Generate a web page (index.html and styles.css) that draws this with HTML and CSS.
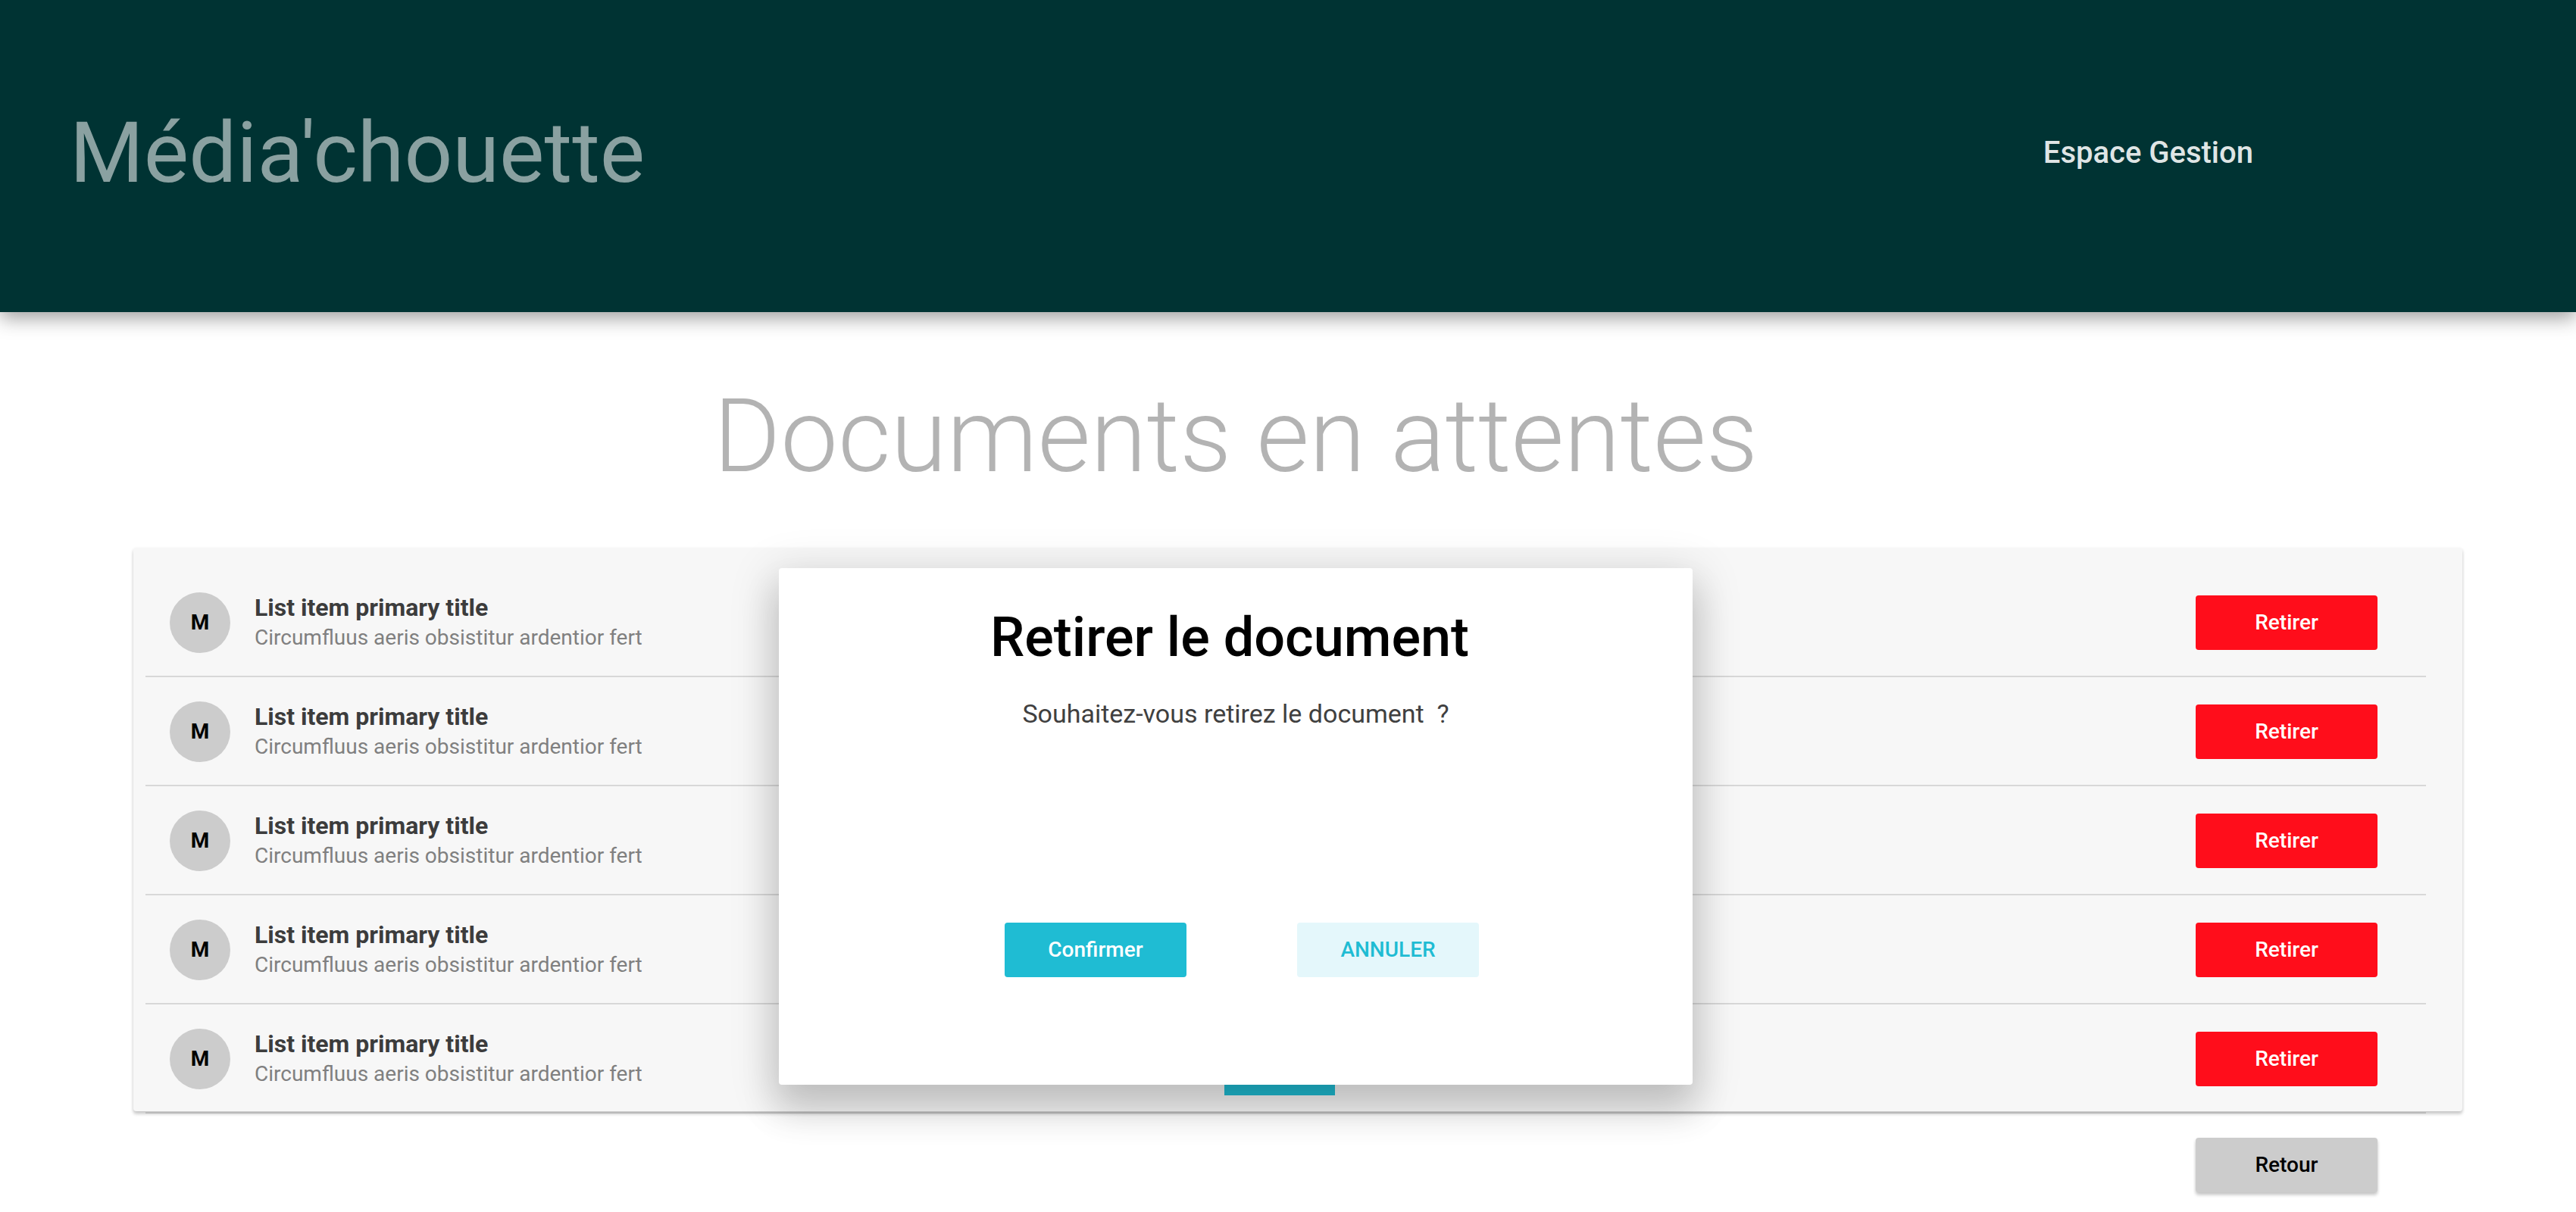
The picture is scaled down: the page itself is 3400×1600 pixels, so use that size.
FILE: index.html
```html
<!DOCTYPE html>
<html lang="fr">
<head>
<meta charset="utf-8">
<meta name="viewport" content="width=device-width, initial-scale=1">
<title>Média'chouette</title>
<link rel="stylesheet" href="styles.css">
</head>
<body>
<header class="topbar">
  <p class="brand">Média'chouette</p>
  <p class="space">Espace Gestion</p>
</header>
<main class="page">
  <h1 class="page-title">Documents en attentes</h1>
  <section class="panel">
    <ul class="list">
      <li class="row">
        <span class="avatar">M</span>
        <div class="text"><h2 class="title">List item primary title</h2><p class="sub">Circumfluus aeris obsistitur ardentior fert</p></div>
        <button class="btn btn-danger" type="button">Retirer</button>
      </li>
      <li class="row">
        <span class="avatar">M</span>
        <div class="text"><h2 class="title">List item primary title</h2><p class="sub">Circumfluus aeris obsistitur ardentior fert</p></div>
        <button class="btn btn-danger" type="button">Retirer</button>
      </li>
      <li class="row">
        <span class="avatar">M</span>
        <div class="text"><h2 class="title">List item primary title</h2><p class="sub">Circumfluus aeris obsistitur ardentior fert</p></div>
        <button class="btn btn-danger" type="button">Retirer</button>
      </li>
      <li class="row">
        <span class="avatar">M</span>
        <div class="text"><h2 class="title">List item primary title</h2><p class="sub">Circumfluus aeris obsistitur ardentior fert</p></div>
        <button class="btn btn-danger" type="button">Retirer</button>
      </li>
      <li class="row">
        <span class="avatar">M</span>
        <div class="text"><h2 class="title">List item primary title</h2><p class="sub">Circumfluus aeris obsistitur ardentior fert</p></div>
        <button class="btn btn-danger" type="button">Retirer</button>
      </li>
    </ul>
  </section>
  <div class="actions">
    <button class="btn btn-back" type="button">Retour</button>
  </div>
  <div class="tab"></div>
  <div class="dialog" role="dialog" aria-labelledby="dialog-title" aria-describedby="dialog-text">
    <h2 class="dialog-title" id="dialog-title">Retirer le document</h2>
    <p class="dialog-text" id="dialog-text">Souhaitez-vous retirez le document&nbsp; ?</p>
    <div class="dialog-actions">
      <button class="btn btn-primary" type="button">Confirmer</button>
      <button class="btn btn-soft" type="button">ANNULER</button>
    </div>
  </div>
</main>
</body>
</html>
```

FILE: styles.css
```css
* { box-sizing: border-box; }

body {
  margin: 0;
  background: #fff;
  color: #000;
  font-family: Roboto, "Liberation Sans", sans-serif;
}

h1, h2, p, ul { margin: 0; padding: 0; }

.topbar {
  display: flex;
  align-items: center;
  justify-content: space-between;
  padding: 130px 426px 138px 92px;
  background: #003333;
  box-shadow: 0 8px 24px rgba(0, 0, 0, 0.38);
}

.brand {
  color: #8aa1a1;
  font-size: 112px;
  line-height: 144px;
}

.space {
  color: #dfe5e5;
  font-size: 40px;
  font-weight: 500;
  line-height: 48px;
}

.page {
  position: relative;
  padding: 84px 150px 24px 176px;
}

.page-title {
  padding-right: 164px;
  color: #b3b3b3;
  font-size: 135px;
  font-weight: 300;
  line-height: 160px;
  text-align: center;
}

.panel {
  height: 744px;
  margin-top: 67px;
  padding: 27px 48px 0 16px;
  background: #f7f7f7;
  border-radius: 4px;
  box-shadow: 0 4px 4px rgba(0, 0, 0, 0.14), 0 2px 4px rgba(0, 0, 0, 0.12);
}

.list { list-style: none; }

.row {
  display: flex;
  align-items: center;
  height: 144px;
  padding: 2px 64px 0 32px;
  border-bottom: 2px solid #d8d8d8;
}

.row:last-child { border-bottom-color: #bababa; }

.avatar {
  width: 80px;
  height: 80px;
  border-radius: 50%;
  background: #ccc;
  font-size: 28px;
  font-weight: 700;
  line-height: 80px;
  text-align: center;
}

.text {
  flex: 1;
  padding-left: 32px;
}

.title {
  color: #3c3c3c;
  font-size: 32px;
  font-weight: 700;
  line-height: 40px;
}

.sub {
  color: #808080;
  font-size: 28px;
  line-height: 40px;
}

.btn {
  width: 240px;
  height: 72px;
  border: 0;
  border-radius: 4px;
  font-family: inherit;
  font-size: 28px;
  font-weight: 500;
  line-height: 72px;
  padding: 0;
}

.btn-danger { background: #ff0d1b; color: #fff; }

.btn-back {
  background: #ccc;
  box-shadow: 0 4px 4px rgba(0, 0, 0, 0.14), 0 2px 4px rgba(0, 0, 0, 0.12);
  color: #000;
}

.btn-primary { background: #1fbcd3; color: #fff; }

.btn-soft { background: #e4f7fb; color: #1fbcd3; }

.actions {
  display: flex;
  justify-content: flex-end;
  margin-top: 35px;
  padding-right: 112px;
}

.tab {
  position: absolute;
  top: 974px;
  left: 1616px;
  width: 146px;
  height: 60px;
  background: #1fbcd3;
}

.dialog {
  position: absolute;
  top: 338px;
  left: 1028px;
  width: 1206px;
  padding: 50px 0 142px;
  border-radius: 4px;
  background: #fff;
  box-shadow: 0 32px 48px 4px rgba(0, 0, 0, 0.14), 0 12px 60px 10px rgba(0, 0, 0, 0.12);
  text-align: center;
}

.dialog-title {
  padding-right: 16px;
  font-size: 72px;
  font-weight: 500;
  line-height: 84px;
}

.dialog-text {
  margin-top: 38px;
  color: #404040;
  font-size: 34px;
  line-height: 40px;
}

.dialog-actions {
  display: flex;
  justify-content: center;
  gap: 146px;
  margin-top: 256px;
  padding-left: 16px;
}
```
